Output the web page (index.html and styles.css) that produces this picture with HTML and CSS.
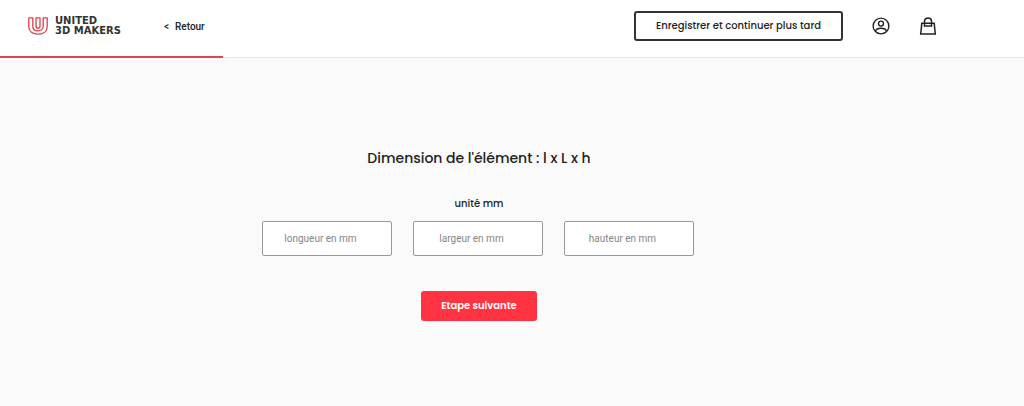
FILE: index.html
```html
<!DOCTYPE html>
<html lang="fr">
<head>
    <meta charset="UTF-8">
    <meta name="viewport" content="width=device-width, initial-scale=1.0">
    <title>United 3D Makers - Dimension de l'élément</title>
    <link rel="stylesheet" href="styles.css">
</head>
<body>
    <header class="header">
        <a href="#" class="logo">
            <svg class="logo-mark" viewBox="0 0 20 18" fill="none" stroke="#e0404a" stroke-width="1.3" stroke-linejoin="round">
                <path d="M.8.8h4v8.400c0 2.800 2 4.700 5.200 4.700s5.200-1.900 5.200-4.700V.8h4v9c0 4.600-3.700 7.400-9.200 7.400S.8 14.400.8 9.800z"/>
                <path d="M8 .8h4v8.400c0 1.300-.7 2-2 2s-2-.7-2-2z"/>
            </svg>
            <span class="logo-text">UNITED<br>3D MAKERS</span>
        </a>
        <a href="#" class="back"><span>&lt;</span> Retour</a>
        <div class="header-actions">
            <button type="button" class="btn btn-outline">Enregistrer et continuer plus tard</button>
            <a href="#" class="icon-link" aria-label="Mon compte">
                <svg class="icon" viewBox="0 0 18 18" fill="none" stroke="#222" stroke-width="1.4">
                    <circle cx="9" cy="9" r="7.900"/>
                    <circle cx="9" cy="6.600" r="2.500"/>
                    <path d="M3.200 14.200c1-2.200 3.200-3 5.800-3s4.800.8 5.800 3"/>
                </svg>
            </a>
            <a href="#" class="icon-link" aria-label="Panier">
                <svg class="icon" viewBox="0 0 18 18" fill="none" stroke="#222" stroke-width="1.500">
                    <path d="M2.800 6.300h12.400l1.100 10.600H1.700z"/>
                    <path d="M5.500 9V4.300C5.500 2.300 7 .9 9 .9s3.500 1.400 3.500 3.400V9z"/>
                </svg>
            </a>
        </div>
    </header>
    <div class="progress"><div class="progress-bar"></div></div>

    <main class="content">
        <h1>Dimension de l'élément : l x L x h</h1>
        <form class="dimension-form">
            <p class="unit">unité mm</p>
            <div class="fields">
                <input type="text" name="longueur" placeholder="longueur en mm" aria-label="longueur en mm">
                <input type="text" name="largeur" placeholder="largeur en mm" aria-label="largeur en mm">
                <input type="text" name="hauteur" placeholder="hauteur en mm" aria-label="hauteur en mm">
            </div>
            <button type="submit" class="btn btn-primary">Etape suivante</button>
        </form>
    </main>
</body>
</html>
```
FILE: styles.css
```css
* {
    margin: 0;
    padding: 0;
    box-sizing: border-box;
}

body {
    background-color: #fafafa;
    color: #222;
    font-family: "Poppins", "Inter", sans-serif;
}

.header {
    display: flex;
    align-items: center;
    padding: 11px 87px 15px 28px;
    background-color: #fff;
}

.logo {
    display: flex;
    align-items: center;
    gap: 7px;
    color: #333;
    text-decoration: none;
}

.logo-mark {
    width: 20px;
    height: 18px;
}

.logo-text {
    font-family: "DejaVu Sans", sans-serif;
    font-size: 10px;
    font-weight: 700;
    line-height: 10px;
}

.back {
    display: flex;
    gap: 6px;
    margin-left: 43px;
    color: #222;
    font-family: "Roboto", sans-serif;
    font-size: 10px;
    font-weight: 500;
    text-decoration: none;
}

.header-actions {
    display: flex;
    align-items: center;
    gap: 29px;
    margin-left: auto;
}

.btn {
    height: 30px;
    padding: 0 20px;
    border: none;
    border-radius: 3px;
    font-family: inherit;
    font-size: 10px;
    font-weight: 600;
    cursor: pointer;
}

.btn-outline {
    border: 2px solid #333;
    background-color: #fff;
    color: #222;
    font-weight: 500;
}

.btn-primary {
    background-color: #ff3341;
    color: #fff;
}

.icon-link {
    display: flex;
}

.icon {
    width: 18px;
    height: 18px;
}

.progress {
    height: 2px;
    border-bottom: 1px solid #e6e6e6;
    background-color: #fff;
}

.progress-bar {
    width: 21.8%;
    height: 2px;
    background-color: #d9464e;
}

.content {
    padding: 88px 66px 80px 0;
    text-align: center;
}

h1 {
    font-size: 14px;
    font-weight: 500;
    line-height: 24px;
}

.unit {
    margin-top: 26px;
    font-size: 10px;
    font-weight: 500;
    line-height: 16px;
}

.fields {
    display: flex;
    justify-content: center;
    gap: 21px;
    margin: 9px 0 35px;
    padding-right: 3px;
}

.fields input {
    width: 130px;
    height: 35px;
    padding: 0 20px 0 8px;
    border: 1px solid #999;
    border-radius: 2px;
    background-color: #fff;
    font-family: "Roboto", sans-serif;
    font-size: 10px;
    text-align: center;
}

.fields input::placeholder {
    color: #858585;
}
```
